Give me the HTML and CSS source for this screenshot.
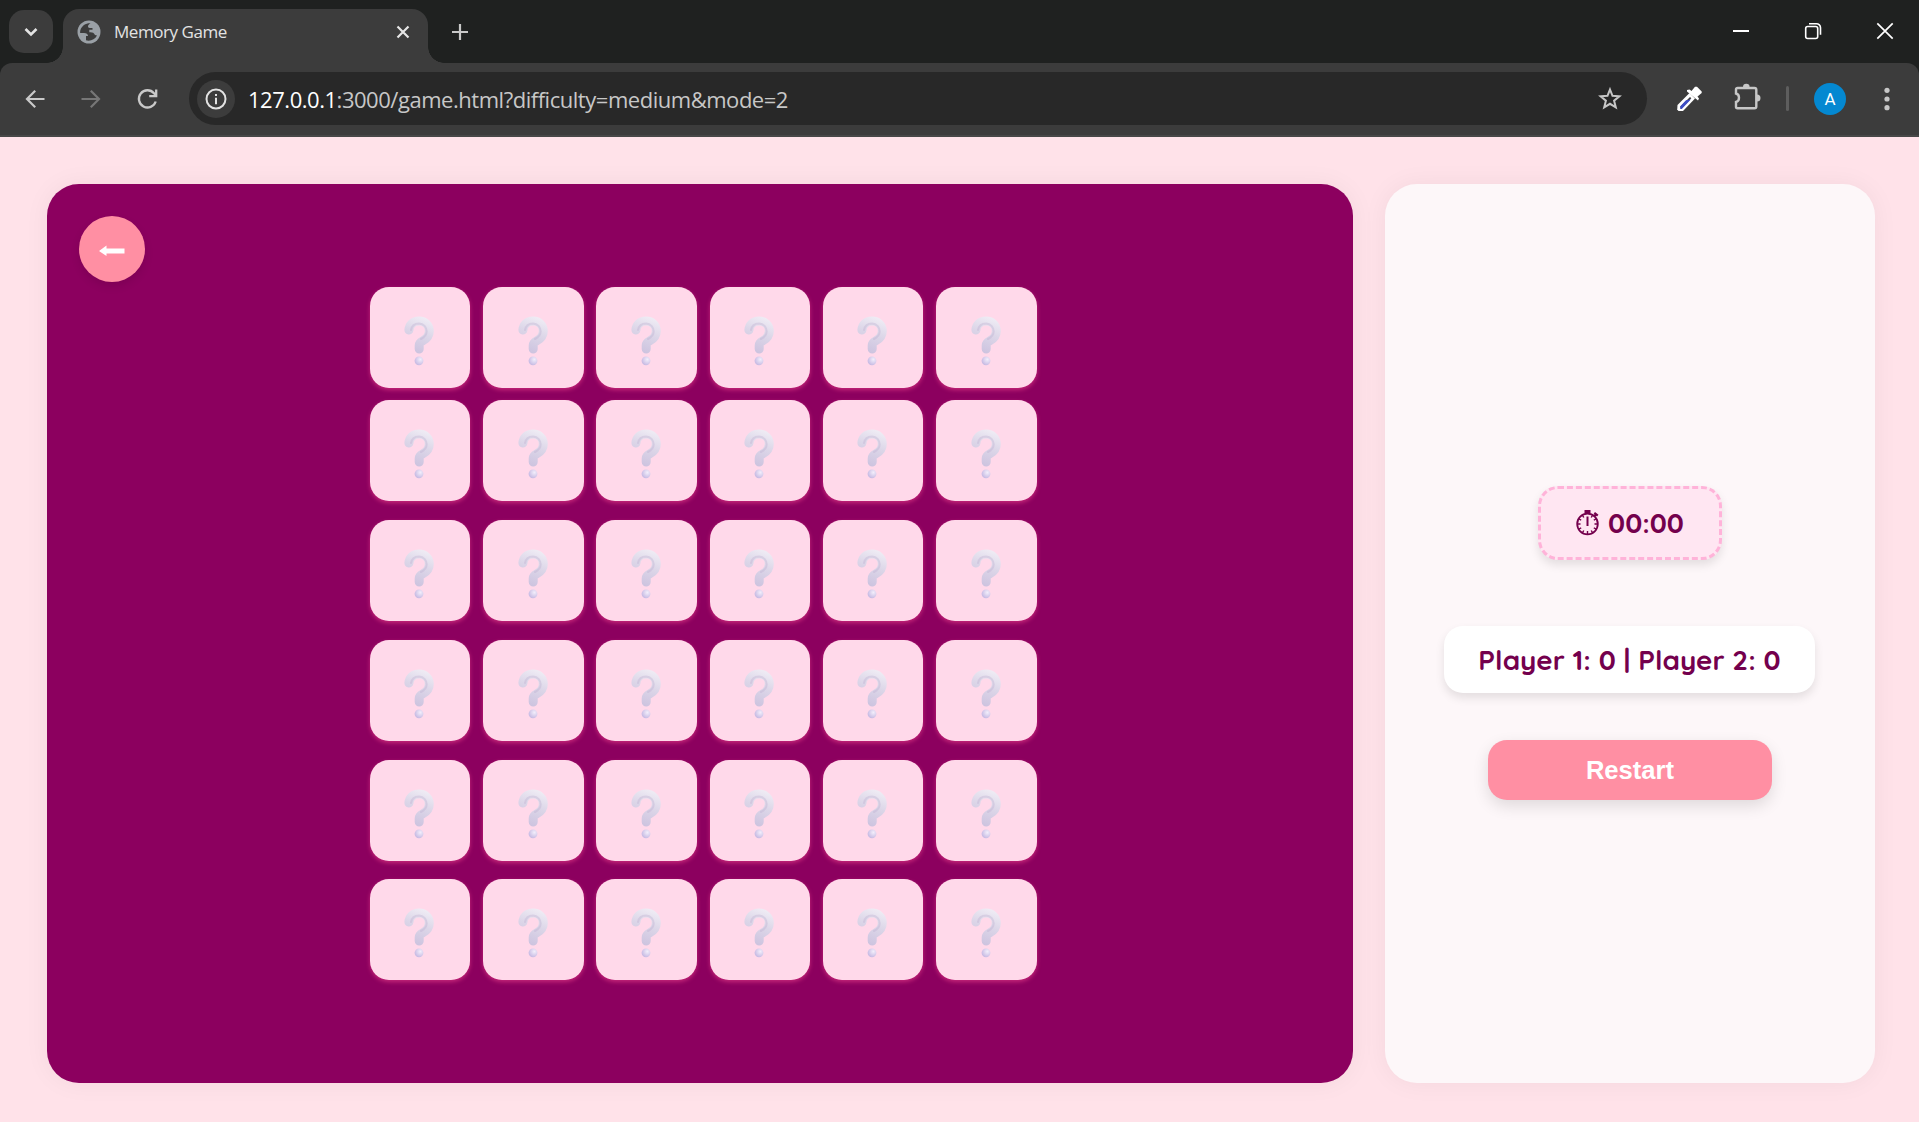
FILE: index.html
```html
<!DOCTYPE html>
<html lang="en">
<head>
<meta charset="utf-8">
<title>Memory Game</title>
<link rel="stylesheet" href="styles.css">
</head>
<body>
<svg class="defs" width="0" height="0" aria-hidden="true">
  <defs>
    <linearGradient id="hook" gradientUnits="userSpaceOnUse" x1="24" y1="2" x2="10" y2="38">
      <stop offset="0" stop-color="#f0edf5"/><stop offset=".45" stop-color="#dcd6e8"/><stop offset="1" stop-color="#cbc1de"/>
    </linearGradient>
    <radialGradient id="dot" cx=".65" cy=".35" r=".7">
      <stop offset="0" stop-color="#f2eefb"/><stop offset="1" stop-color="#c5b8e2"/>
    </radialGradient>
    <filter id="soft" x="-20%" y="-20%" width="140%" height="140%" color-interpolation-filters="sRGB"><feGaussianBlur stdDeviation=".7"/></filter>
    <symbol id="question" viewBox="0 0 30 50">
      <path d="M4.900 14 C5.400 8.500 9.400 5 15 5 C21 5 25.300 9.300 25.300 15 C25.300 20 22.500 23 18.500 25 C16 26.300 15.200 27.500 15.200 29.500 V33" fill="none" stroke="url(#hook)" stroke-width="9" stroke-linecap="round"/>
      <path d="M7 14 C7.800 10 11 7.400 15 7.400 C20 7.700 22.700 11.500 22.700 15.500 C22.500 19.500 20 21.500 17 23" fill="none" stroke="#b9adcf" stroke-opacity=".35" stroke-width="2" stroke-linecap="round" filter="url(#soft)"/>
      <circle cx="15" cy="44.800" r="4.400" fill="url(#dot)"/>
    </symbol>
  </defs>
</svg>

<header class="browser">
  <div class="tabstrip">
    <div class="tab-search"><svg width="20" height="20" viewBox="0 0 20 20"><path d="M4.500 7l5.500 5.500L15.500 7" fill="none" stroke="#e3e3e3" stroke-width="2.600"/></svg></div>
    <div class="tab">
      <svg class="globe" width="24" height="24" viewBox="0 0 24 24"><circle cx="12" cy="12" r="11.500" fill="#9aa0a6"/><path d="M13.500 3.200 C9 3 4.500 5.500 3.300 10.500 C3 12 3.100 12.500 3.200 13 H7 C9.500 13 11 14 11 16 H9 V20.300 C13 21.500 18 19.800 20 15.500 L18 15 C17 13 15.500 12.300 13.500 12.300 H12.300 V9.800 H15.500 V8 C13 8.200 11 8 11 6.500 C11 5 12 4.500 13.500 3.200Z" fill="#3c3c3c"/></svg>
      <span class="tab-title">Memory Game</span>
      <svg class="tab-close" width="14" height="14" viewBox="0 0 14 14"><path d="M1.500 1.500l11 11M12.500 1.500l-11 11" stroke="#e6e6e6" stroke-width="2.200"/></svg>
    </div>
    <svg class="new-tab" width="18" height="18" viewBox="0 0 18 18"><path d="M9 1v16M1 9h16" stroke="#c9c9c9" stroke-width="2.200"/></svg>
    <div class="window-controls">
      <svg width="18" height="18" viewBox="0 0 18 18"><path d="M1 9h16" stroke="#fff" stroke-width="2"/></svg>
      <svg width="18" height="18" viewBox="0 0 18 18"><rect x="1.700" y="4.500" width="12" height="12" rx="2" fill="none" stroke="#fff" stroke-width="1.600"/><path d="M5 1.700h7.500a4 4 0 0 1 4 4v7" fill="none" stroke="#fff" stroke-width="1.600"/></svg>
      <svg width="18" height="18" viewBox="0 0 18 18"><path d="M1.300 1.300l15.400 15.400M16.700 1.300L1.300 16.700" stroke="#fff" stroke-width="1.700"/></svg>
    </div>
  </div>
  <div class="toolbar">
    <svg class="nav" width="24" height="24" viewBox="0 0 24 24"><path d="M21.500 12H4M12.200 3.700L4 12l8.200 8.300" fill="none" stroke="#c9c9c9" stroke-width="2.200"/></svg>
    <svg class="nav" width="24" height="24" viewBox="0 0 24 24"><path d="M2.500 12H20M11.800 3.700L20 12l-8.200 8.300" fill="none" stroke="#777" stroke-width="2.200"/></svg>
    <svg class="nav" width="24" height="24" viewBox="0 0 24 24"><path d="M20.700 14.500A8.600 8.600 0 1 1 19 6.200L21 8.500M21.200 2.500V9.200H14.200" fill="none" stroke="#c9c9c9" stroke-width="2.300"/></svg>
    <div class="address">
      <span class="info"><svg width="22" height="22" viewBox="0 0 22 22"><circle cx="11" cy="11" r="9.500" fill="none" stroke="#e3e3e3" stroke-width="2"/><path d="M11 9.700v6.500M11 6v2.100" stroke="#e3e3e3" stroke-width="2"/></svg></span>
      <span class="url"><b>127.0.0.1</b>:3000/game.html?difficulty=medium&amp;mode=2</span>
      <svg class="star" width="26" height="26" viewBox="0 0 26 26"><path d="M13 3.500l2.500 6.300 6.900.5-5.300 4.400 1.700 6.700L13 17.800l-5.800 3.600 1.700-6.700-5.300-4.400 6.900-.5z" fill="none" stroke="#c7c7c7" stroke-width="2"/></svg>
    </div>
    <svg class="picker" width="26" height="26" viewBox="0 0 26 26"><path d="M2.500 25L1.200 23.500 1.500 19 13.500 7 19 12.500 7 25Z" fill="#fff"/><path d="M4.500 20.500L14 11l1.300 1.300-10 10.200H4.500z" fill="#3c3c3c"/><path d="M4.300 20.300L10 14.300l4.800-.8-9 9.500H4.300z" fill="#3b4cc4"/><path d="M11 5.500V4L13.500 3.500l2 1.500L19 .800h2L25.700 5.500v1.500L21.500 10.500l1.500 2-1 2z" fill="#fff"/></svg>
    <svg class="puzzle" width="28" height="28" viewBox="0 0 28 28"><path d="M4.500 5H21.500a1.800 1.800 0 0 1 1.800 1.800V23.500a1.800 1.800 0 0 1-1.800 1.800H4.500a1.500 1.500 0 0 1-1.500-1.500V19C7 18 7 11.500 3 10.500V6.500A1.500 1.500 0 0 1 4.500 5" fill="none" stroke="#c7c7c7" stroke-width="2.400"/><path d="M10 4a3.300 3.300 0 0 1 6.600 0zM24 11.500a3.500 3.500 0 0 1 0 7z" fill="#c7c7c7"/></svg>
    <span class="divider"></span>
    <span class="avatar">A</span>
    <svg class="menu" width="6" height="24" viewBox="0 0 6 24"><g fill="#c7c7c7"><circle cx="3" cy="3.300" r="2.600"/><circle cx="3" cy="12" r="2.600"/><circle cx="3" cy="20.700" r="2.600"/></g></svg>
  </div>
</header>

<main class="game">
  <section class="board">
    <button class="back" aria-label="Back"><svg width="26" height="12" viewBox="0 0 26 12"><path d="M0 6L7.500 .500V3.500H25.500V8.500H7.500V11Z" fill="#fff"/></svg></button>
    <div class="cards" id="cards"></div>
  </section>
  <aside class="panel">
    <div class="timer">
      <svg width="24" height="26" viewBox="0 0 24 26"><g fill="none" stroke="#74004d"><circle cx="11.500" cy="14" r="10.300" stroke-width="1.800"/><path d="M11.500 16V6.500" stroke-width="2"/><path d="M11.500 24v-3M1.500 14h3M18.500 14h3M6.500 22.700l1.300-2.200M16.500 22.700l-1.300-2.200M2.900 19l2.300-1.200M20.100 19l-2.300-1.200M2.900 9l2.300 1.200M20.100 9l-2.300 1.200M6.500 5.300l1.300 2.200M16.500 5.300l-1.300 2.200" stroke-width="1.400"/><path d="M18 6.500l2.200-2.500" stroke-width="2"/></g><path d="M8.500 0h6v3.500h-6zM19 2l3.500 2.800-1.500 1.700-3.300-2.800z" fill="#74004d"/></svg>
      <span>00:00</span>
    </div>
    <div class="score">Player 1: 0 | Player 2: 0</div>
    <button class="restart">Restart</button>
  </aside>
</main>
<script src="script.js"></script>
</body>
</html>
```
FILE: styles.css
```css
* { box-sizing: border-box; }
body { margin: 0; height: 1122px; overflow: hidden; display: flex; flex-direction: column; background: #ffe2e9; font-family: "Open Sans", sans-serif; }
svg { display: block; flex: none; }
.defs { position: absolute; }
button { border: 0; padding: 0; }

.browser { background: #1f2120; height: 137px; flex: none; }
.tabstrip { height: 63px; display: flex; align-items: flex-start; padding: 0 25px 0 9px; }
.tab-search { width: 44px; height: 43px; margin-top: 10px; border-radius: 15px; background: #3c3c3c; display: grid; place-items: center; }
.tab { position: relative; width: 365px; height: 54px; margin: 9px 0 0 10px; background: #3c3c3c; border-radius: 16px 16px 0 0; display: flex; align-items: center; padding: 0 18px 8px 14px; }
.tab::before, .tab::after { content: ""; position: absolute; bottom: 0; width: 16px; height: 16px; }
.tab::before { right: 100%; background: radial-gradient(circle at 0 0, transparent 15.500px, #3c3c3c 16px); }
.tab::after { left: 100%; background: radial-gradient(circle at 100% 0, transparent 15.500px, #3c3c3c 16px); }
.tab-title { margin-left: 13px; color: #e3e3e3; font-size: 17px; line-height: 24px; letter-spacing: -.450px; flex: 1; white-space: nowrap; }
.new-tab { margin: 23px 0 0 23px; }
.window-controls { margin: 22px 0 0 auto; display: flex; gap: 54px; }

.toolbar { height: 74px; background: #3c3c3c; border-bottom: 2px solid #474747; border-radius: 12px 12px 0 0; display: flex; align-items: center; padding: 0 29px 1px 23px; }
.nav { margin-right: 32px; }
.nav:nth-child(3) { margin-right: 30px; }
.address { width: 1458px; height: 53px; border-radius: 27px; background: #282828; display: flex; align-items: center; padding: 0 24px 0 8px; }
.info { width: 38px; height: 38px; border-radius: 50%; background: #3c3c3c; display: grid; place-items: center; }
.url { margin-left: 13px; flex: 1; color: #c7c7c7; font-size: 22px; line-height: 30px; letter-spacing: -.470px; white-space: nowrap; }
.url b { color: #fff; font-weight: 400; }
.picker { margin-left: 29px; }
.puzzle { margin-left: 31px; margin-top: -3px; }
.divider { width: 3px; height: 25px; margin-left: 25px; border-radius: 2px; background: #5e5e5e; }
.avatar { width: 32px; height: 32px; margin: 0 auto 0 25px; border-radius: 50%; background: #0488d1; color: #fff; font: 17px/33px Roboto, sans-serif; text-align: center; }

.game { flex: 1; display: grid; grid-template-columns: 1306px 490px; gap: 32px; padding: 47px 44px 39px 47px; }
.board, .panel { border-radius: 32px; box-shadow: 0 0 26px rgba(0, 0, 0, .05); }
.board { background: #8c005f; padding: 32px; display: flex; align-items: flex-start; }
.back { width: 66px; height: 66px; border-radius: 50%; background: #ff8fa3; display: grid; place-items: center; padding: 4px 1px 0 0; box-shadow: 0 4px 10px rgba(0, 0, 0, .1); }
.cards { margin: 71px 0 0 224.800px; display: grid; grid-template-columns: repeat(6, 100.650px); grid-template-rows: 100.750px repeat(5, 107.250px); gap: 12.500px 12.600px; }
.card { height: 101px; border-radius: 19px; background: #ffd9ea; box-shadow: 0 2px 4px rgba(255, 77, 148, .5); padding: 29px 0 0 34.700px; }

.panel { background: #fdf7f9; display: flex; flex-direction: column; align-items: center; padding-top: 302px; color: #74004d; font: 700 27.800px/34px Quicksand, Lato, sans-serif; }
.timer { width: 184px; height: 74px; border: 3px dashed #ffb3d9; border-radius: 20px; background: #ffe6f2; display: flex; align-items: center; justify-content: center; gap: 8px; box-shadow: 0 5px 10px rgba(0, 0, 0, .1); }
.score { width: 371px; height: 67px; margin: 66px 1px 0 0; border-radius: 19px; background: #fff; text-align: center; line-height: 68px; white-space: nowrap; box-shadow: 0 5px 10px rgba(0, 0, 0, .1); }
.restart { width: 284px; height: 60px; margin-top: 47px; border-radius: 19px; background: #ff8fa3; color: #fff; font: 700 25.600px/60px "Liberation Sans", Arial, sans-serif; box-shadow: 0 6px 16px rgba(0, 0, 0, .12); }
```
FILE: script.js
```js
const cards = document.getElementById("cards");
for (let i = 0; i < 36; i++) {
  const card = document.createElement("div");
  card.className = "card";
  card.innerHTML = '<svg width="30" height="50"><use href="#question"/></svg>';
  cards.appendChild(card);
}
```
